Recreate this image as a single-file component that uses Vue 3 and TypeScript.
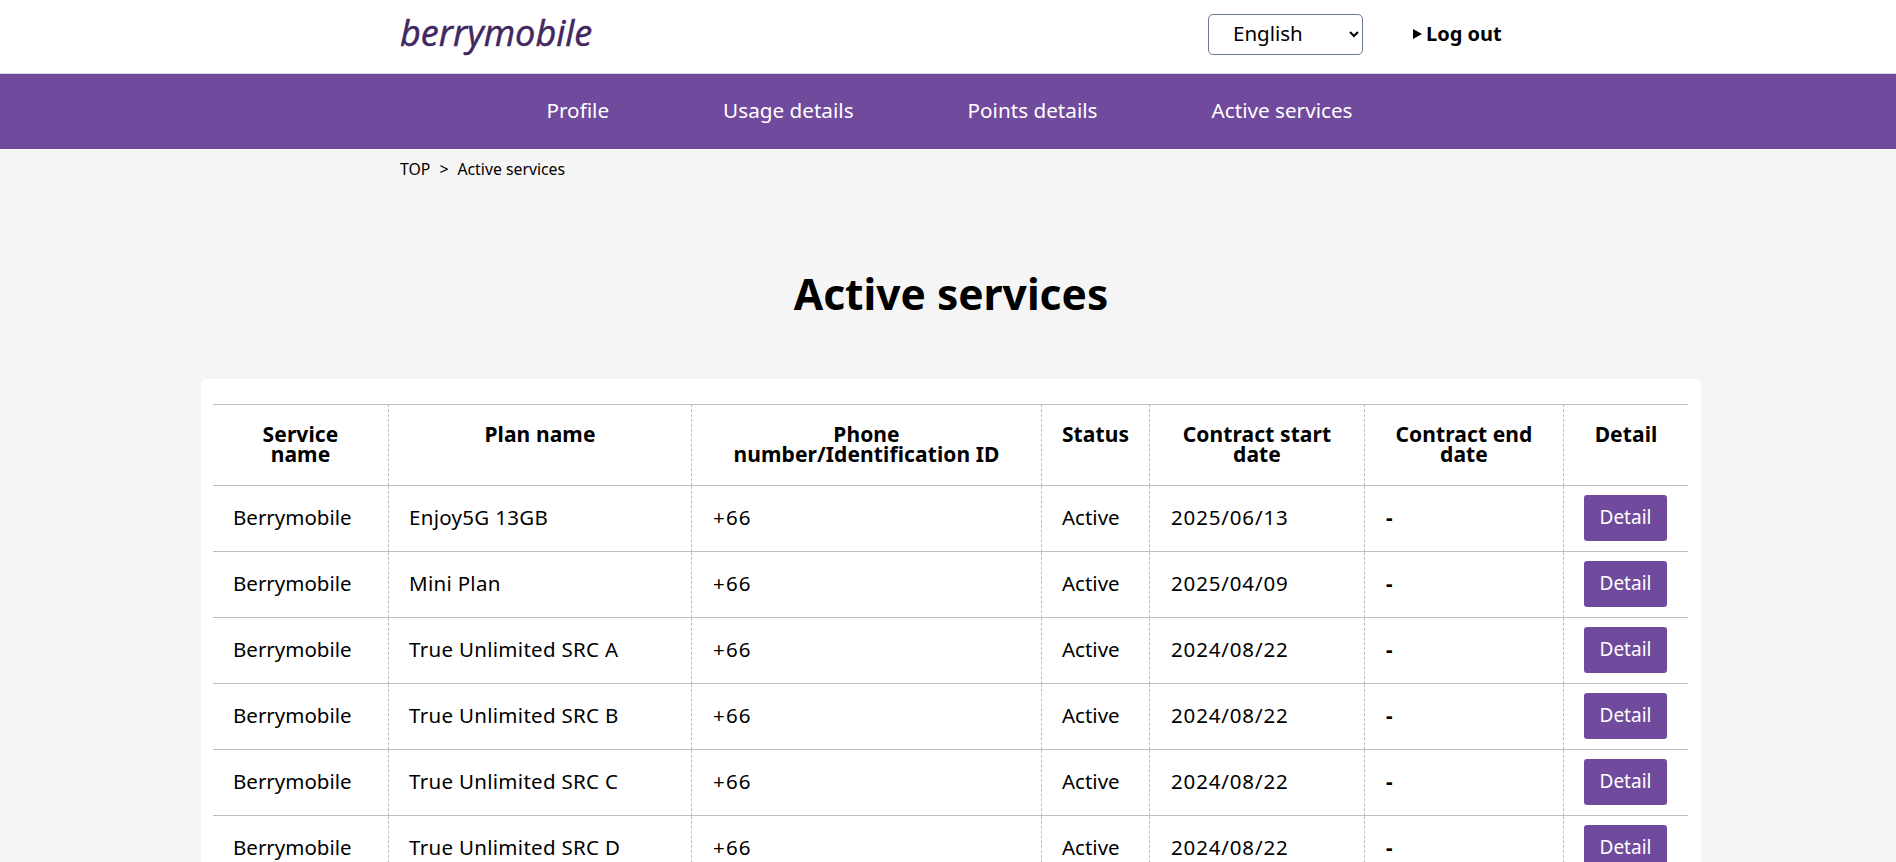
<template>
  <div class="page">
    <header class="site-header">
      <div class="header-inner">
        <a class="logo">berrymobile</a>
        <select class="lang-select">
          <option>English</option>
        </select>
        <a class="logout"><span class="logout-arrow"></span>Log out</a>
      </div>
    </header>

    <nav class="main-nav">
      <a v-for="item in navItems" :key="item" class="nav-link">{{ item }}</a>
    </nav>

    <div class="breadcrumb">
      <span>TOP</span>
      <span class="breadcrumb-sep">&gt;</span>
      <span>Active services</span>
    </div>

    <h1 class="page-title">Active services</h1>

    <section class="card">
      <table class="services">
        <colgroup>
          <col v-for="w in colWidths" :key="w" :style="{ width: `${w}px` }" />
        </colgroup>
        <thead>
          <tr>
            <th>Service<br />name</th>
            <th>Plan name</th>
            <th>Phone<br />number/Identification ID</th>
            <th>Status</th>
            <th>Contract start<br />date</th>
            <th>Contract end<br />date</th>
            <th>Detail</th>
          </tr>
        </thead>
        <tbody>
          <tr v-for="row in rows" :key="row.plan">
            <td>Berrymobile</td>
            <td class="plan">{{ row.plan }}</td>
            <td class="phone">+66</td>
            <td>Active</td>
            <td class="date">{{ row.start }}</td>
            <td class="dash">-</td>
            <td class="action"><button class="detail-btn">Detail</button></td>
          </tr>
        </tbody>
      </table>
    </section>
  </div>
</template>

<script setup lang="ts">
interface ServiceRow {
  plan: string
  start: string
}

const navItems: string[] = ['Profile', 'Usage details', 'Points details', 'Active services']

const colWidths: number[] = [175, 303, 350, 108, 215, 199, 125]

const rows: ServiceRow[] = [
  { plan: 'Enjoy5G 13GB', start: '2025/06/13' },
  { plan: 'Mini Plan', start: '2025/04/09' },
  { plan: 'True Unlimited SRC A', start: '2024/08/22' },
  { plan: 'True Unlimited SRC B', start: '2024/08/22' },
  { plan: 'True Unlimited SRC C', start: '2024/08/22' },
  { plan: 'True Unlimited SRC D', start: '2024/08/22' }
]
</script>

<style>
html,
body {
  margin: 0;
  background: #f5f5f5;
  overflow: hidden;
}
</style>

<style scoped>
.page {
  font-family: "Noto Sans", "Open Sans", sans-serif;
  color: #000;
  background: #f5f5f5;
}

.site-header {
  background: #fff;
  height: 73px;
  border-bottom: 1px solid #d8d8d8;
}

.header-inner {
  display: flex;
  align-items: center;
  height: 100%;
  padding-left: 400px;
}

.logo {
  font-family: "Open Sans", sans-serif;
  font-style: italic;
  font-size: 36px;
  -webkit-text-stroke: 0.5px #41275f;
  color: #41275f;
  line-height: 1;
  margin-bottom: 8px;
  width: 808px;
}

.lang-select {
  width: 155px;
  height: 41px;
  font-family: inherit;
  font-size: 20.5px;
  color: #000;
  background: #fff;
  border: 1px solid #6b7a90;
  border-radius: 5px;
  padding: 0 0 4px 20px;
  box-sizing: border-box;
  margin-bottom: 4px;
}

.logout {
  display: flex;
  align-items: center;
  margin-left: 50px;
  margin-bottom: 6px;
  font-size: 20px;
  font-weight: 700;
}

.logout-arrow {
  width: 0;
  height: 0;
  border-left: 9px solid #000;
  border-top: 5px solid transparent;
  border-bottom: 5px solid transparent;
  margin-right: 4px;
}

.main-nav {
  display: flex;
  justify-content: center;
  align-items: center;
  gap: 114px;
  height: 75px;
  padding: 0 0 3px 3px;
  box-sizing: border-box;
  background: #704a9c;
}

.nav-link {
  color: #fff;
  font-size: 20.7px;
}

.breadcrumb {
  display: flex;
  gap: 9px;
  padding: 10px 0 0 400px;
  font-size: 15.8px;
  line-height: 20px;
}

.page-title {
  margin: 85px 0 0;
  font-size: 42.5px;
  line-height: 60px;
  font-weight: 700;
  text-align: center;
  padding-left: 6px;
}

.card {
  width: 1500px;
  box-sizing: border-box;
  margin: 55px 0 0 201px;
  padding: 25px 13px 25px 12px;
  background: #fff;
  border-radius: 5px;
}

.services {
  width: 1475px;
  table-layout: fixed;
  border-collapse: separate;
  border-spacing: 0;
}

.services th,
.services td {
  border-bottom: 1px solid #bdbdbd;
  border-left: 1px dashed #bdbdbd;
  box-sizing: border-box;
}

.services th:first-child,
.services td:first-child {
  border-left: 0;
}

.services th {
  height: 82px;
  border-top: 1px solid #bdbdbd;
  padding: 19px 4px 0;
  font-size: 21px;
  line-height: 20px;
  letter-spacing: 0.1px;
  font-weight: 700;
  text-align: center;
  vertical-align: top;
}

.services td {
  height: 66px;
  padding: 0 20px 4px;
  font-size: 20.5px;
  vertical-align: middle;
}

.services td.plan {
  letter-spacing: 0.3px;
}

.services td.phone {
  padding-left: 21px;
  letter-spacing: 1.2px;
}

.services td.date {
  padding-left: 21px;
  letter-spacing: 0.85px;
}

.services td.dash {
  padding-left: 21px;
  font-weight: 700;
}

.services td.action {
  padding-bottom: 1px;
}

.detail-btn {
  display: block;
  width: 83px;
  height: 46px;
  padding: 0 0 3px;
  border: 0;
  border-radius: 3px;
  background: #704a9c;
  color: #fff;
  font-family: inherit;
  font-size: 19px;
}
</style>
